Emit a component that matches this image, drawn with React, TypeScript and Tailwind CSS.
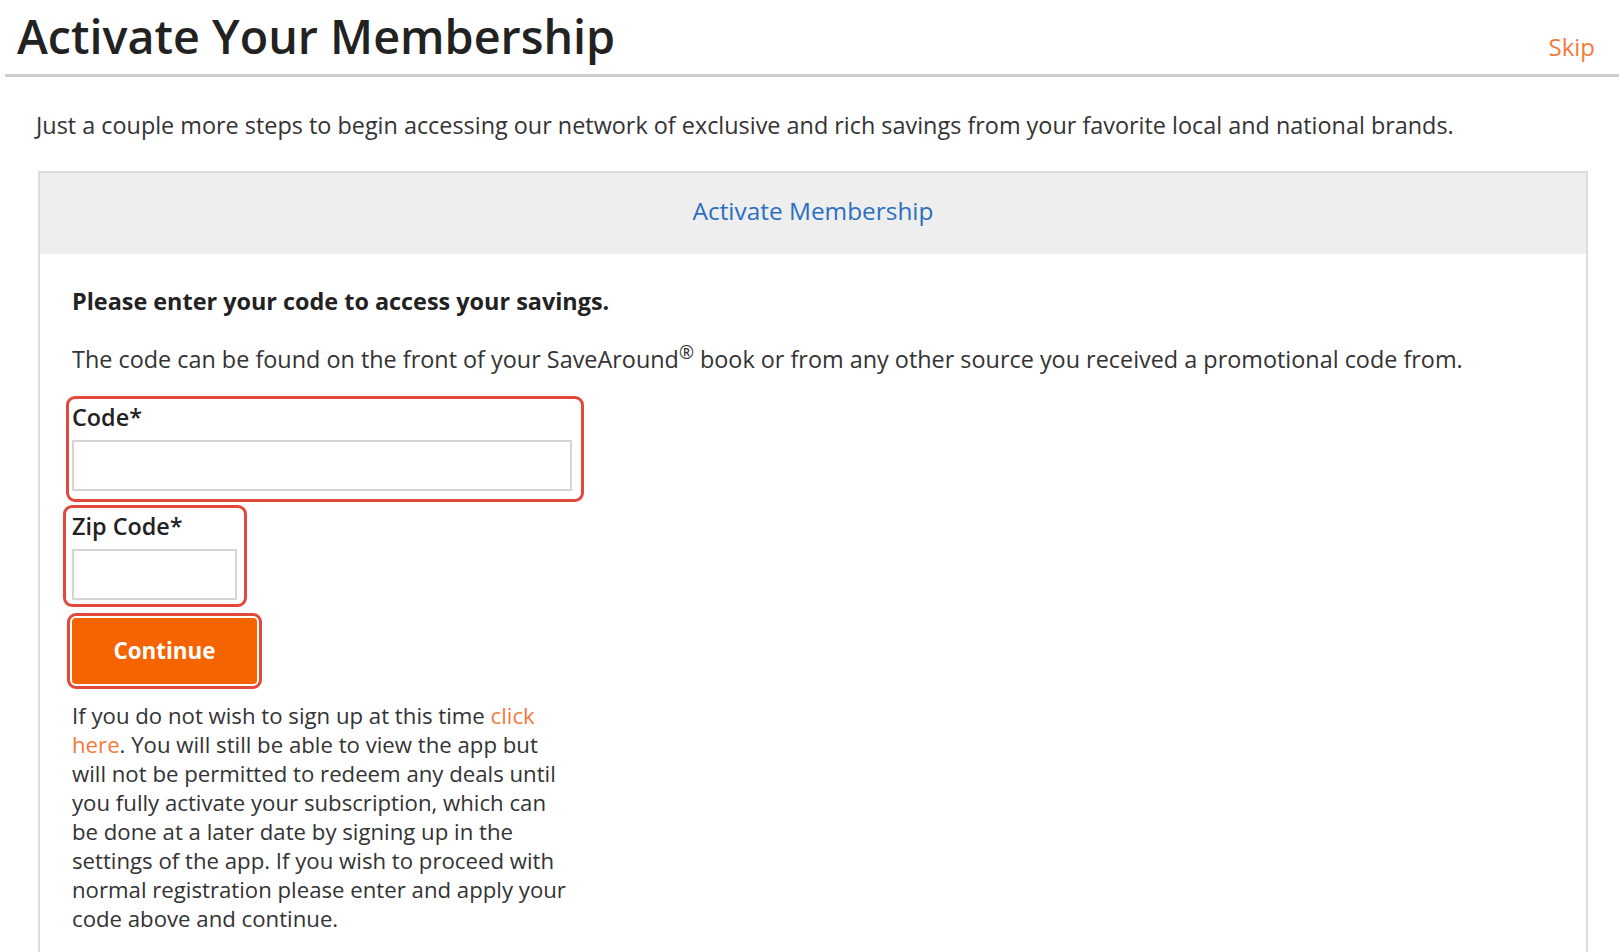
import React from "react";

export default function App() {
  return (
    <div className="min-h-[952px] w-[1619px] overflow-hidden bg-white font-['Open_Sans',sans-serif] text-[#333333]">
      {/* Header */}
      <div className="ml-[5px] flex h-[77px] items-start justify-between border-b-[3px] border-[#cfcfcf] pl-[12px] pr-[24px] pt-[8px]">
        <h1 className="text-[46.7px] font-semibold leading-[56px] text-[#222222]">Activate Your Membership</h1>
        <a href="#" className="mt-[24px] text-[24px] leading-[30px] text-[#f47a3a]">Skip</a>
      </div>

      {/* Intro */}
      <p className="mt-[33px] pl-[36px] text-[23.4px] leading-[30px]">
        Just a couple more steps to begin accessing our network of exclusive and rich savings from your favorite local and national brands.
      </p>

      {/* Panel */}
      <div className="ml-[38px] mt-[31px] min-h-[800px] w-[1550px] border-2 border-b-0 border-[#dddddd]">
        <div className="flex h-[81px] items-center justify-center bg-[#eeeeee] pb-[6px]">
          <a href="#" className="text-[24.4px] leading-[30px] text-[#2a6fc0]">Activate Membership</a>
        </div>
        <div className="pl-[32px] pt-[32px]">
          <p className="text-[23.4px] font-bold leading-[30px] text-[#222222]">Please enter your code to access your savings.</p>
          <p className="mt-[28px] text-[23.4px] leading-[30px]">
            The code can be found on the front of your SaveAround<sup className="text-[18px]">®</sup> book or from any other source you received a promotional code from.
          </p>

          <div className="-ml-[6px] mt-[22px] w-[518px] rounded-[9px] border-[3px] border-[#e2483b] pb-[8px] pl-[3px] pt-[3px]">
            <label className="block text-[23.4px] font-semibold leading-[30px] text-[#222222]">Code*</label>
            <input className="mt-[8px] block h-[51px] w-[500px] border-2 border-[#d5d5d5] bg-white outline-none" />
          </div>

          <div className="-ml-[9px] mt-[3px] w-[184px] rounded-[9px] border-[3px] border-[#e2483b] pb-[4px] pl-[6px] pt-[3px]">
            <label className="block text-[23.4px] font-semibold leading-[30px] text-[#222222]">Zip Code*</label>
            <input className="mt-[8px] block h-[51px] w-[165px] border-2 border-[#d5d5d5] bg-white outline-none" />
          </div>

          <div className="-ml-[5px] mt-[6px] inline-block rounded-[9px] border-[3px] border-[#e2483b] p-[2px]">
            <button className="flex h-[66px] w-[185px] items-center justify-center rounded-[4px] bg-[#f56400] text-[22.4px] font-bold text-white">
              Continue
            </button>
          </div>

          <p className="mt-[12px] w-[500px] text-[22.2px] leading-[29px]">
            If you do not wish to sign up at this time <a href="#" className="text-[#f47a3a]">click here</a>. You will still be able to view the app but will not be permitted to redeem any deals until you fully activate your subscription, which can be done at a later date by signing up in the settings of the app. If you wish to proceed with normal registration please enter and apply your code above and continue.
          </p>
        </div>
      </div>
    </div>
  );
}
